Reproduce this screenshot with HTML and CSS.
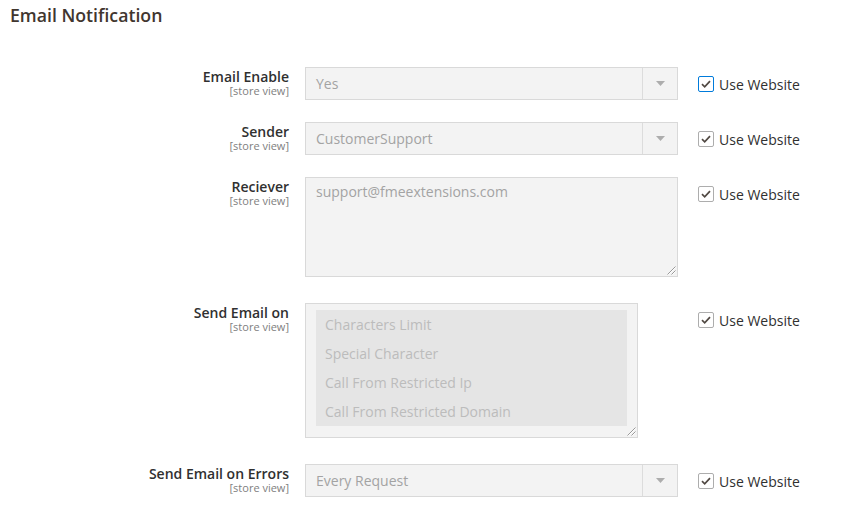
FILE: index.html
```html
<!DOCTYPE html>
<html lang="en">
<head>
<meta charset="utf-8">
<title>Email Notification</title>
<link rel="stylesheet" href="styles.css">
</head>
<body>
<h2 class="section-title">Email Notification</h2>
<div class="form">
  <div class="row">
    <div class="label"><span class="label-text">Email Enable</span><span class="scope">[store view]</span></div>
    <div class="control">
      <div class="select"><span class="select-value">Yes</span><span class="select-arrow"><svg width="9" height="5" viewBox="0 0 9 5"><path d="M0 0H9L4.5 5Z" fill="#adadad"/></svg></span></div>
    </div>
    <div class="use-default"><span class="checkbox checkbox-focused"><svg width="14" height="14" viewBox="0 0 14 14"><path d="M3 7.2L5.7 9.8L11 4.2" fill="none" stroke="#514943" stroke-width="1.7"/></svg></span><span class="use-default-text">Use Website</span></div>
  </div>
  <div class="row">
    <div class="label"><span class="label-text">Sender</span><span class="scope">[store view]</span></div>
    <div class="control">
      <div class="select"><span class="select-value">CustomerSupport</span><span class="select-arrow"><svg width="9" height="5" viewBox="0 0 9 5"><path d="M0 0H9L4.5 5Z" fill="#adadad"/></svg></span></div>
    </div>
    <div class="use-default"><span class="checkbox"><svg width="14" height="14" viewBox="0 0 14 14"><path d="M3 7.2L5.7 9.8L11 4.2" fill="none" stroke="#514943" stroke-width="1.7"/></svg></span><span class="use-default-text">Use Website</span></div>
  </div>
  <div class="row row-tall">
    <div class="label"><span class="label-text">Reciever</span><span class="scope">[store view]</span></div>
    <div class="control">
      <div class="textarea">support@fmeextensions.com<svg class="grip" width="9" height="9" viewBox="0 0 9 9"><path d="M8.5 0.5L0.5 8.5M8.5 4.5L4.5 8.5" stroke="#9a9a9a" stroke-width="1"/><path d="M8.5 1.5L1.5 8.5M8.5 5.5L5.5 8.5" stroke="#ffffff" stroke-width="1"/></svg></div>
    </div>
    <div class="use-default"><span class="checkbox"><svg width="14" height="14" viewBox="0 0 14 14"><path d="M3 7.2L5.7 9.8L11 4.2" fill="none" stroke="#514943" stroke-width="1.7"/></svg></span><span class="use-default-text">Use Website</span></div>
  </div>
  <div class="row row-tall">
    <div class="label"><span class="label-text">Send Email on</span><span class="scope">[store view]</span></div>
    <div class="control">
      <div class="multiselect">
        <div class="options">
          <div class="option">Characters Limit</div>
          <div class="option">Special Character</div>
          <div class="option">Call From Restricted Ip</div>
          <div class="option">Call From Restricted Domain</div>
        </div>
        <svg class="grip" width="9" height="9" viewBox="0 0 9 9"><path d="M8.5 0.5L0.5 8.5M8.5 4.5L4.5 8.5" stroke="#9a9a9a" stroke-width="1"/><path d="M8.5 1.5L1.5 8.5M8.5 5.5L5.5 8.5" stroke="#ffffff" stroke-width="1"/></svg>
      </div>
    </div>
    <div class="use-default"><span class="checkbox"><svg width="14" height="14" viewBox="0 0 14 14"><path d="M3 7.2L5.7 9.8L11 4.2" fill="none" stroke="#514943" stroke-width="1.7"/></svg></span><span class="use-default-text">Use Website</span></div>
  </div>
  <div class="row">
    <div class="label"><span class="label-text">Send Email on Errors</span><span class="scope">[store view]</span></div>
    <div class="control">
      <div class="select"><span class="select-value">Every Request</span><span class="select-arrow"><svg width="9" height="5" viewBox="0 0 9 5"><path d="M0 0H9L4.5 5Z" fill="#adadad"/></svg></span></div>
    </div>
    <div class="use-default"><span class="checkbox"><svg width="14" height="14" viewBox="0 0 14 14"><path d="M3 7.2L5.7 9.8L11 4.2" fill="none" stroke="#514943" stroke-width="1.7"/></svg></span><span class="use-default-text">Use Website</span></div>
  </div>
</div>
</body>
</html>
```

FILE: styles.css
```css
* { box-sizing: border-box; }
html, body { margin: 0; padding: 0; background: #ffffff; }
body {
  font-family: "Open Sans", "Liberation Sans", sans-serif;
  color: #303030;
  font-size: 14px;
}
.section-title {
  margin: 0;
  padding: 3px 0 0 10px;
  font-size: 17.7px;
  line-height: 24px;
  font-weight: 600;
  color: #41362f;
}
.form {
  padding-top: 40px;
}
.row {
  display: flex;
  align-items: flex-start;
  margin-bottom: 22px;
}
.row-tall {
  margin-bottom: 26px;
}
.label {
  width: 289px;
  flex: none;
  display: flex;
  flex-direction: column;
  align-items: flex-end;
  text-align: right;
  padding-top: 0.5px;
}
.label-text {
  font-size: 14px;
  line-height: 17px;
  font-weight: 600;
  color: #303030;
}
.scope {
  font-size: 11px;
  line-height: 11px;
  color: #808080;
}
.control {
  width: 373px;
  flex: none;
  margin-left: 16px;
}
.select {
  display: flex;
  height: 33px;
  border: 1px solid #d9d9d9;
  background: #f3f3f3;
  color: #a3a3a3;
}
.select-value {
  flex: 1;
  padding-left: 10px;
  line-height: 31px;
}
.select-arrow {
  width: 35px;
  border-left: 1px solid #dcdcdc;
  display: flex;
  align-items: center;
  justify-content: center;
}
.textarea {
  position: relative;
  height: 100px;
  border: 1px solid #d9d9d9;
  background: #f3f3f3;
  color: #a3a3a3;
  padding: 5px 10px;
  line-height: 18px;
}
.grip {
  position: absolute;
  right: 1px;
  bottom: 1px;
}
.multiselect {
  position: relative;
  width: 333px;
  height: 135px;
  border: 1px solid #d9d9d9;
  background: #f3f3f3;
  padding: 6px 10px 0 10px;
}
.options {
  background: #e5e5e5;
}
.option {
  height: 29px;
  line-height: 29px;
  padding-left: 9px;
  color: #bcbcbc;
}
.use-default {
  margin-left: 20px;
  padding-top: 9px;
  display: flex;
  align-items: center;
}
.checkbox {
  width: 16px;
  height: 16px;
  border: 1px solid #adadad;
  border-radius: 2px;
  background: #ffffff;
  display: flex;
  align-items: center;
  justify-content: center;
}
.checkbox-focused {
  border-color: #007bdb;
}
.use-default-text {
  margin-left: 5px;
  font-size: 14px;
  line-height: 15px;
  color: #303030;
}
```
